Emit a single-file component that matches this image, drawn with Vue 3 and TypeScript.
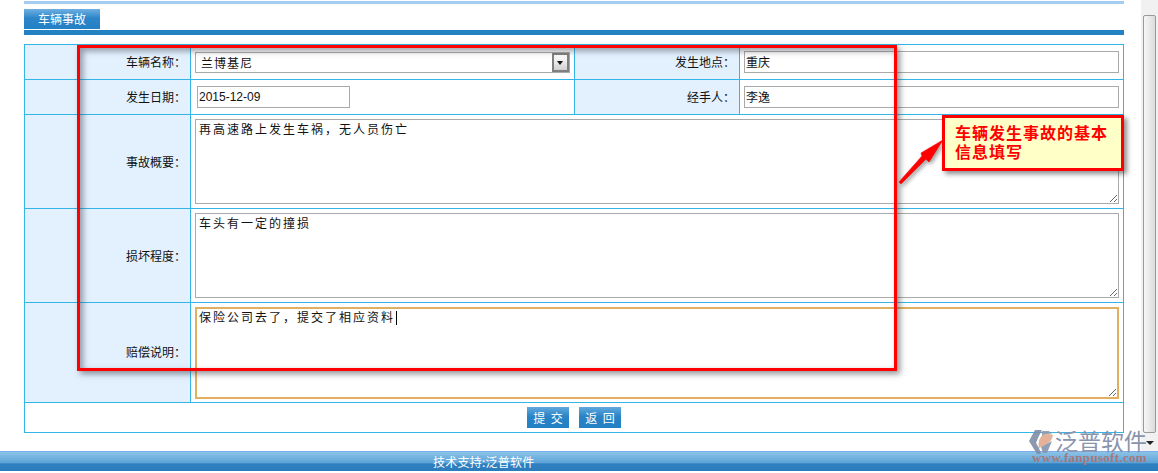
<script setup lang="ts">
interface Row {
  label: string
  value: string
}
const colon = '\uFF1A'
const comma = '\uFF0C'
const top: Row[] = [
  { label: '发生地点' + colon, value: '重庆' },
  { label: '经手人' + colon, value: '李逸' },
]
const areas: Row[] = [
  { label: '事故概要' + colon, value: '再高速路上发生车祸' + comma + '无人员伤亡' },
  { label: '损坏程度' + colon, value: '车头有一定的撞损' },
]
const focusText = '保险公司去了' + comma + '提交了相应资料'
</script>

<template>
  <div class="page">
    <div class="upper">
      <main class="content">
        <div class="topline"></div>
        <div class="tab">车辆事故</div>
        <div class="tabline"></div>
        <table class="form">
          <colgroup>
            <col class="c1" />
            <col class="c2" />
            <col class="c3" />
            <col />
          </colgroup>
          <tbody>
            <tr class="short">
              <th>车辆名称{{ colon }}</th>
              <td>
                <div class="select">
                  <span>兰博基尼</span>
                  <i class="drop"></i>
                </div>
              </td>
              <th>{{ top[0].label }}</th>
              <td><input class="field wide" :value="top[0].value" readonly /></td>
            </tr>
            <tr class="short">
              <th>发生日期{{ colon }}</th>
              <td><input class="field date" value="2015-12-09" readonly /></td>
              <th>{{ top[1].label }}</th>
              <td><input class="field wide" :value="top[1].value" readonly /></td>
            </tr>
            <tr v-for="a in areas" :key="a.label" class="tall">
              <th>{{ a.label }}</th>
              <td colspan="3"><textarea class="area" :value="a.value" readonly></textarea></td>
            </tr>
            <tr class="focus">
              <th>赔偿说明{{ colon }}</th>
              <td colspan="3">
                <div class="areawrap">
                  <textarea class="area active" :value="focusText" readonly></textarea>
                  <i class="caret"></i>
                </div>
              </td>
            </tr>
            <tr class="actions">
              <td colspan="4">
                <div class="btns">
                  <button class="btn">提 交</button>
                  <button class="btn">返 回</button>
                </div>
              </td>
            </tr>
          </tbody>
        </table>
      </main>
      <aside class="scroll">
        <div class="thumb"></div>
        <i class="down"></i>
      </aside>
    </div>
    <footer class="foot">技术支持:泛普软件</footer>

    <div class="redbox"></div>
    <svg class="arrow" width="60" height="80" viewBox="0 0 60 80">
      <path d="M6 66 L29 40 L28 37 L50 24 L36 46 L33 43 L8 68 Z" fill="#f00" stroke="#f00" stroke-width=".6" />
    </svg>
    <div class="callout">车辆发生事故的基本信息填写</div>

    <div class="mark">
      <svg class="marklogo" width="26" height="26" viewBox="0 0 26 26">
        <path d="M6 0 H13 L9 8 L7 13 L10 18 L12 24 H8 L0 11 Z" fill="#7f8da6" />
        <path d="M13 1 H20 L23 4 Q16 3 13 8 Z" fill="#8f9bb0" />
        <path d="M10 18 Q8 9 14 5 Q19 3 24 5 Q23 12 16 15 Z" fill="#e3a98f" />
        <path d="M12 17 L23 11 L18 23 H14 Z" fill="#8595ad" />
      </svg>
      <span class="markcn">泛普软件</span>
      <span class="marken">www.fanpusoft.com</span>
    </div>
  </div>
</template>

<style>
html, body { margin: 0; background: #fff; overflow: hidden; }
</style>

<style scoped>
.page {
  position: relative;
  width: 1158px;
  height: 473px;
  display: flex;
  flex-direction: column;
  font: 12px "Noto Sans CJK SC", "Liberation Sans", sans-serif;
  color: #111;
  overflow: hidden;
  background: #fff;
}
.upper { display: flex; height: 451px; }
.content { width: 1100px; margin-left: 24px; padding-top: 1px; }
.topline { height: 3px; background: #a3ccf0; }
.tab {
  width: 76px;
  height: 20px;
  margin-top: 5px;
  box-sizing: border-box;
  padding-left: 14px;
  line-height: 20px;
  font-size: 12px;
  color: #fff;
  background: linear-gradient(#6fb0e2, #2d86c8 45%, #2380c4);
}
.tabline { height: 5px; margin-top: 1px; background: #2282c4; }
.form {
  width: 1100px;
  margin-top: 9px;
  table-layout: fixed;
  border-collapse: collapse;
  border: 1px solid #33b5e8;
}
.c1 { width: 166px; }
.c2 { width: 384px; }
.c3 { width: 165px; }
th, td { border: 1px solid #33b5e8; padding: 0; }
th {
  background: #e3f1ff;
  font-weight: 400;
  text-align: right;
  padding: 0 4px 1px 0;
}
td { padding-left: 4px; padding-right: 4px; }
.short { height: 35px; }
.tall { height: 94px; }
.focus { height: 100px; }
.focus th { padding-bottom: 2px; }
.actions { height: 30px; }
.actions td { padding: 0; }
.btns { display: flex; justify-content: center; gap: 10px; }
.field {
  display: block;
  height: 22px;
  box-sizing: border-box;
  border: 1px solid #aaa;
  padding: 0 1px 1px;
  font: 12px "Liberation Sans", "Noto Sans CJK SC", sans-serif;
  color: #111;
  outline: none;
}
.wide { width: 375px; }
.date { width: 153px; margin-left: 2px; }
.select {
  width: 375px;
  height: 21px;
  box-sizing: border-box;
  border: 1px solid #aaa;
  display: flex;
  align-items: center;
  justify-content: space-between;
  padding-left: 5px;
  letter-spacing: 1px;
}
.drop {
  width: 17px;
  height: 19px;
  box-sizing: border-box;
  border: 2px solid #808080;
  background: linear-gradient(#fff, #d0d0d0);
  position: relative;
}
.drop::after {
  content: "";
  position: absolute;
  left: 3px;
  top: 6px;
  border: 3px solid transparent;
  border-top: 4px solid #111;
  border-bottom: 0;
}
.area {
  display: block;
  width: 924px;
  height: 85px;
  box-sizing: border-box;
  border: 1px solid #aaa;
  padding: 1px 3px;
  font: 12px/16px "Noto Sans CJK SC", sans-serif;
  letter-spacing: 2px;
  color: #111;
  outline: none;
}
.areawrap { position: relative; }
.active { height: 92px; border: 2px solid #e0b060; padding: 0 2px; }
.caret {
  position: absolute;
  left: 201px;
  top: 4px;
  width: 1px;
  height: 14px;
  background: #000;
}
.btn {
  width: 42px;
  height: 21px;
  padding: 0;
  border: 0;
  color: #fff;
  font: 12px "Noto Sans CJK SC", sans-serif;
  word-spacing: 3px;
  background: linear-gradient(#62a9de, #2a84c6 45%, #2280c4);
}
.scroll {
  position: relative;
  width: 17px;
  margin-left: 17px;
  background: #f1f1f1;
}
.thumb {
  position: absolute;
  left: 2px;
  top: 15px;
  width: 13px;
  height: 418px;
  box-sizing: border-box;
  border: 1px solid #999;
  border-radius: 2px;
  background: linear-gradient(90deg, #f6f6f6, #dcdcdc);
}
.down {
  position: absolute;
  left: 5px;
  top: 441px;
  border: 4px solid transparent;
  border-top: 4px solid #222;
  border-bottom: 0;
}
.foot {
  height: 20px;
  line-height: 19px;
  box-sizing: border-box;
  border-top: 1px solid #7aaee8;
  padding-left: 433px;
  letter-spacing: .25px;
  color: #fff;
  background: linear-gradient(#8cc3e8, #5ba2d6 58%, #2f80c0 62%, #2a7cbc);
}
.redbox {
  position: absolute;
  left: 77px;
  top: 45px;
  width: 820px;
  height: 326px;
  box-sizing: border-box;
  border: 3px solid #f00;
  box-shadow: 3px 3px 6px rgba(60, 60, 70, .55), inset 3px 3px 6px rgba(60, 60, 70, .5);
}
.arrow {
  position: absolute;
  left: 893px;
  top: 116px;
  filter: drop-shadow(2px 2px 2px rgba(0, 0, 0, .4));
}
.callout {
  position: absolute;
  left: 942px;
  top: 115px;
  width: 182px;
  height: 56px;
  box-sizing: border-box;
  border: 3px solid #f00;
  padding: 5px 10px;
  background: #ffffc8;
  color: #f00;
  font: 700 16px/19px "Noto Sans CJK SC", sans-serif;
  letter-spacing: 1px;
  box-shadow: 3px 3px 5px rgba(0, 0, 0, .45);
}
.mark {
  position: absolute;
  left: 1029px;
  top: 430px;
  width: 129px;
  height: 40px;
}
.marklogo { position: absolute; left: 0; top: 0; opacity: .9; }
.markcn {
  position: absolute;
  left: 26px;
  top: -1px;
  font-size: 23px;
  line-height: 22px;
  white-space: nowrap;
  color: #8a94ad;
}
.marken {
  position: absolute;
  left: 3px;
  top: 22px;
  font: 700 13px/12px "Liberation Serif", serif;
  letter-spacing: .3px;
  white-space: nowrap;
  color: #a87878;
}
</style>
